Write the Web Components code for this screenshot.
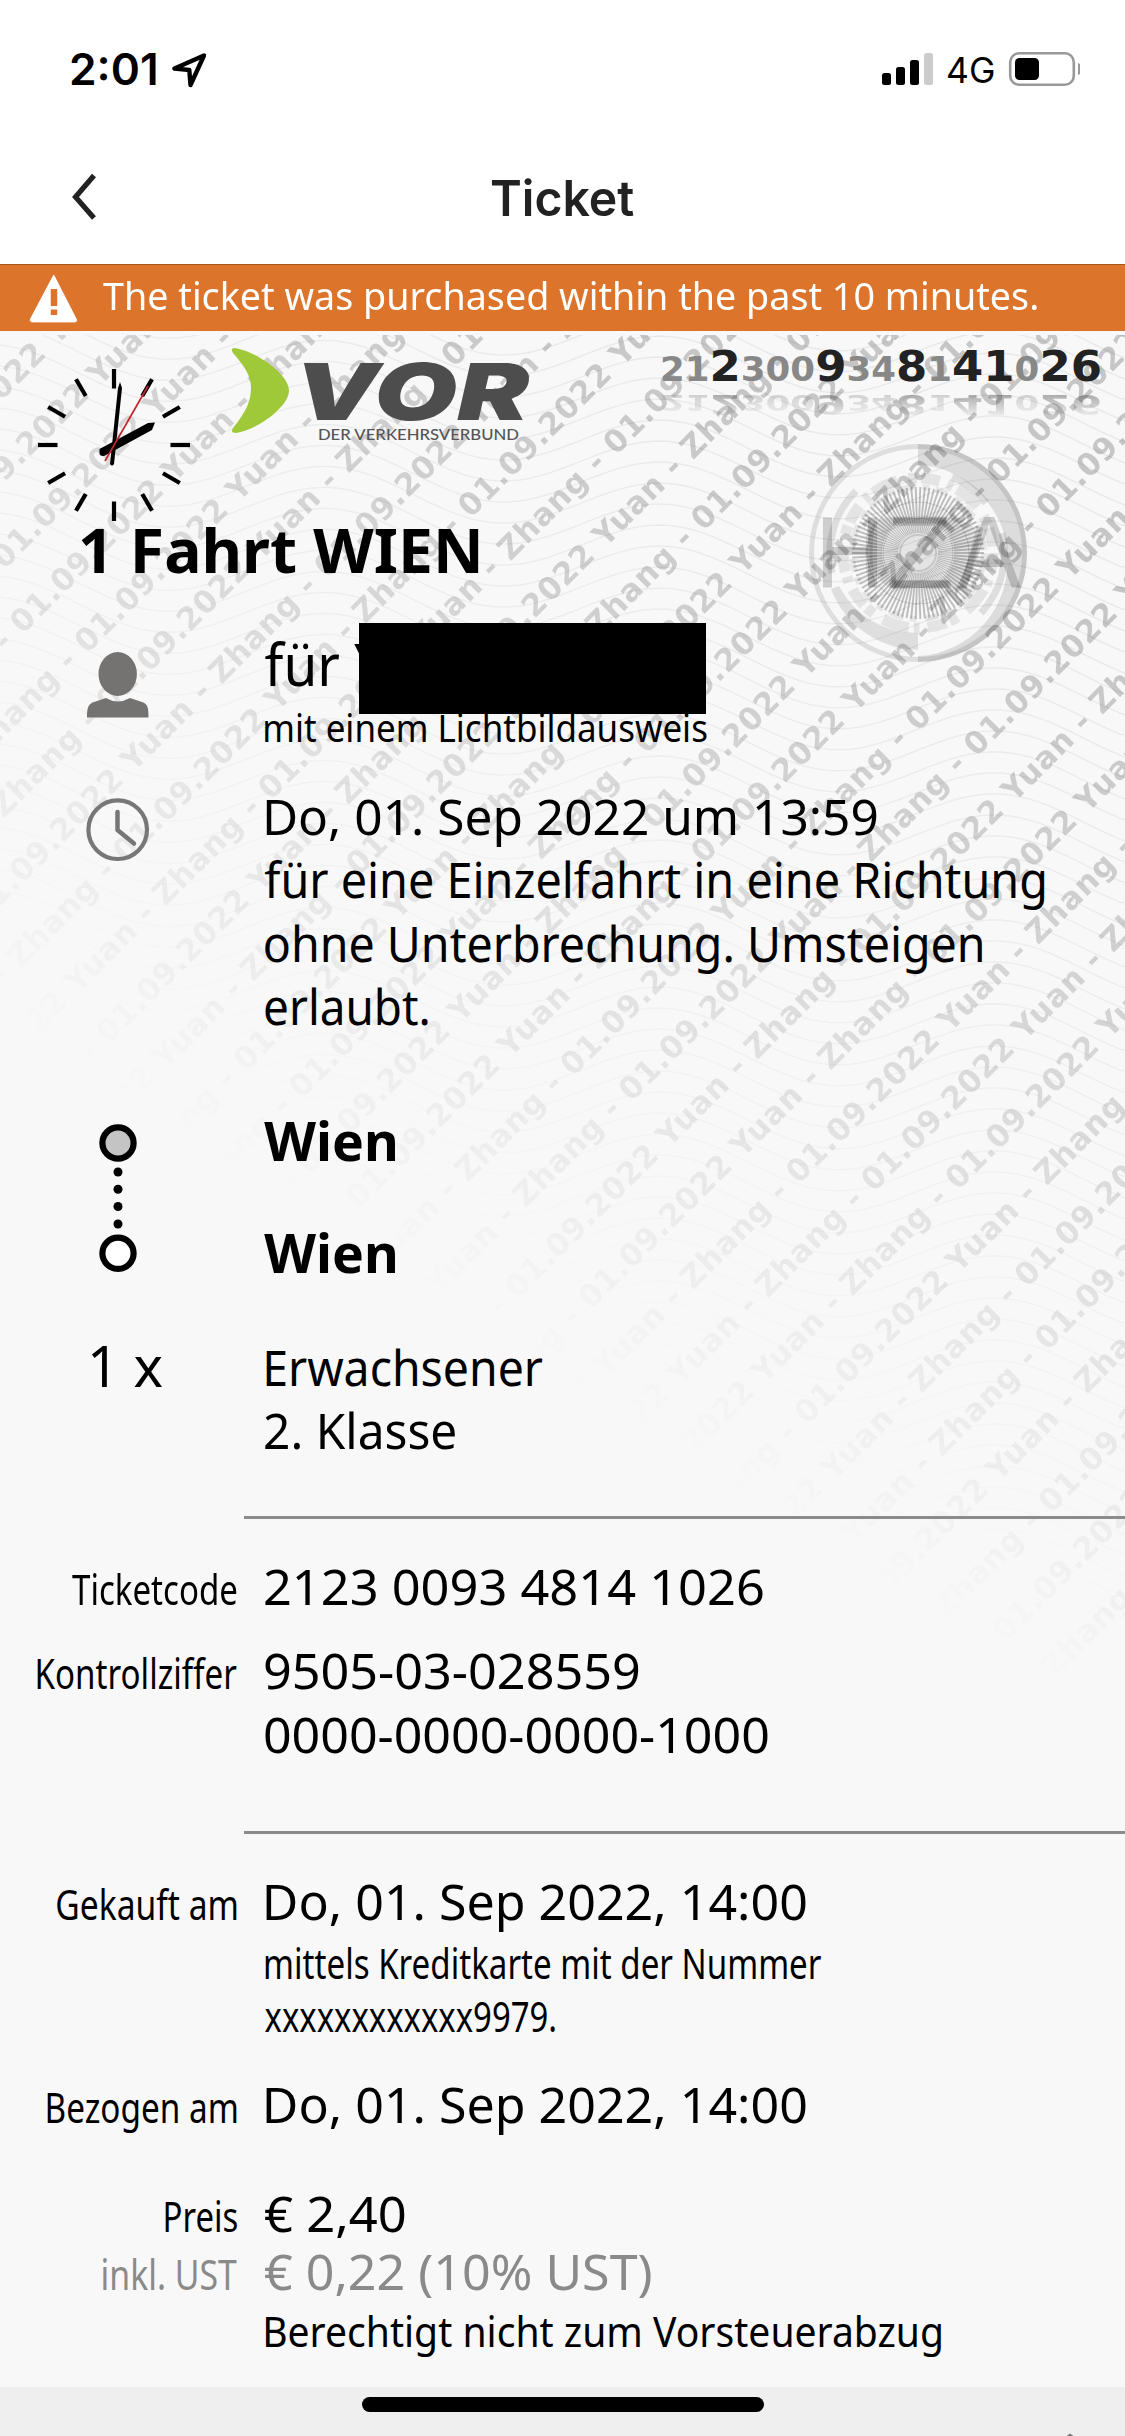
<!DOCTYPE html>
<html lang="de">
<head>
<meta charset="utf-8">
<title>Ticket</title>
<style>
html,body{margin:0;padding:0}
body{width:1125px;height:2436px;overflow:hidden;background:#fff}
</style>
</head>
<body>
<ticket-app></ticket-app>
<script>
const SANS = '"Noto Sans","Open Sans",sans-serif';
const UI = 'Inter,"Liberation Sans",sans-serif';
const measure = document.createElement('canvas').getContext('2d');

function define(name, html, setup) {
  const tpl = document.createElement('template');
  tpl.innerHTML = html;
  customElements.define(name, class extends HTMLElement {
    constructor() {
      super();
      this.attachShadow({ mode: 'open' }).appendChild(tpl.content.cloneNode(true));
    }
    connectedCallback() { if (setup) setup.call(this, this.shadowRoot); }
  });
}

/* One line of text whose ink fills a given width, on a given baseline. */
customElements.define('fit-text', class extends HTMLElement {
  connectedCallback() {
    const a = (n, d) => this.getAttribute(n) || d;
    const size = +a('size', 48.5), w = +a('w', 100), base = +a('base', 50.5), h = +a('h', 60), dx = +a('dx', 0);
    const weight = a('weight', '400'), style = a('fstyle', 'normal');
    const family = this.hasAttribute('ui') ? UI : a('family', SANS);
    const text = a('text', '');
    measure.font = `${style} ${weight} ${size}px ${family}`;
    const m = measure.measureText(text);
    const s = w / (m.actualBoundingBoxLeft + m.actualBoundingBoxRight);
    const pad = base - (m.fontBoundingBoxAscent - m.fontBoundingBoxDescent) / 2;
    const root = this.shadowRoot || this.attachShadow({ mode: 'open' });
    root.innerHTML = `<style>
      :host{display:block;flex:none;width:${w}px;height:${h}px;color:${a('color', '#000')}}
      span{display:block;width:max-content;white-space:pre;margin-top:0;padding-top:${pad}px;
        font:${style} ${weight} ${size}px/0 ${family};transform-origin:0 0;
        transform:translateX(${m.actualBoundingBoxLeft * s + dx}px) scaleX(${s})}
    </style><span></span>`;
    root.querySelector('span').textContent = text;
  }
});

define('status-bar', `<style>
  :host{display:flex;height:132px;padding:0 45px 0 71px;box-sizing:border-box;justify-content:space-between}
  div{display:flex;align-items:flex-start}
  svg{display:block}
</style>
<div><fit-text ui weight="600" size="44" w="85" base="85" text="2:01"></fit-text>
<svg width="50" height="132" viewBox="156 0 50 132"><path d="M204 55.500L174.500 68.500L189.300 70L190.500 85L204 55.500Z" fill="none" stroke="#000" stroke-width="4.400" stroke-linejoin="round"/></svg></div>
<div><svg width="66" height="132" viewBox="882 0 66 132"><g fill="#000"><rect x="882" y="73" width="9" height="12" rx="2.500"/><rect x="896" y="67" width="9" height="18" rx="2.500"/><rect x="910" y="60" width="9" height="25" rx="2.500"/><rect x="924" y="53" width="9" height="32" rx="2.500" fill="#ccc"/></g></svg>
<fit-text ui weight="400" size="35.500" w="46" base="83" text="4G"></fit-text>
<svg width="86" height="132" viewBox="994 0 86 132"><rect x="1010.200" y="53.200" width="63.600" height="31.600" rx="9" fill="#fff" stroke="#999" stroke-width="2.600"/><rect x="1015" y="58" width="24" height="22" rx="4.500"/><path d="M1078 63v12c5-2 5-10 0-12z" fill="#999"/></svg></div>`);

define('nav-bar', `<style>
  :host{display:flex;height:132px}
  svg{display:block;width:491px;height:132px}
</style>
<svg viewBox="0 132 491 132"><path d="M94 175.500L75.500 197L94 218" fill="none" stroke="#222" stroke-width="5.200"/></svg>
<fit-text ui weight="600" size="49" w="143" base="84" color="#222" text="Ticket"></fit-text>`);

define('notice-banner', `<style>
  :host{display:flex;height:67px;box-sizing:border-box;border-top:1px solid #a4561e;background:#dc752b}
  svg{display:block;flex:none;width:102.500px;height:66px}
</style>
<svg viewBox="0 265 103 66"><path d="M54 275L76.500 319Q78 322 75 322H33Q29 322 31 318.500Z" fill="#fff" stroke="#fff" stroke-linejoin="round"/><path d="M51 289h6.500v17H51zM51 309.500h6.500v5.500H51z" fill="#dc752b"/></svg>
<fit-text size="38.500" w="934" base="45" color="#fff" text="The ticket was purchased within the past 10 minutes."></fit-text>`);

/* Security background: waves, diagonal holder text and the inspection seal. */
define('ticket-watermark', `<style>
  :host{display:block;position:absolute;left:0;top:4px;width:1125px;height:1700px;overflow:hidden;pointer-events:none}
  svg{display:block}
</style>
<svg width="1125" height="1700" viewBox="0 335 1125 1700" aria-hidden="true">
<defs><linearGradient id="f" gradientUnits="userSpaceOnUse" x1="700" y1="350" x2="190" y2="1143">
<stop offset="0" stop-color="#fff"/><stop offset=".3" stop-color="#fff" stop-opacity=".8"/><stop offset=".65" stop-color="#fff" stop-opacity=".4"/><stop offset="1" stop-color="#fff" stop-opacity="0"/></linearGradient>
<mask id="m" maskUnits="userSpaceOnUse" x="0" y="335" width="1125" height="1700"><rect y="335" width="1125" height="1700" fill="url(#f)"/></mask></defs>
<g mask="url(#m)"><g id="waves" fill="none" stroke="#000" stroke-opacity=".06" stroke-width="1.500"></g>
<g id="rows" transform="rotate(-45)" fill="#000" fill-opacity=".2" font-family="'DejaVu Sans',sans-serif" font-weight="700" font-size="31"></g></g>
<g id="seal" transform="translate(918 553)">
 <circle r="106.500" fill="none" stroke="#000" stroke-opacity=".1" stroke-width="5"/>
 <path d="M0-109A109 109 0 0 1 109 0A109 109 0 0 1 0 109V103A94 94 0 0 0 89 0C88-44 45-88 0-88Z" fill="#000" fill-opacity=".11"/>
 <path d="M0 97A95 95 0 0 1-87 36L-79 33A87 87 0 0 0 0 80Z" fill="#000" fill-opacity=".1"/>
 <path d="M-86 20A88 88 0 0 1-62-62M63 60A87 87 0 0 0 84-20M34-76A84 84 0 0 1 68-50" fill="none" stroke="#000" stroke-opacity=".1" stroke-width="7"/>
 <circle r="75" fill="none" stroke="#000" stroke-opacity=".08" stroke-width="11" stroke-dasharray="19 8 6 5 27 11 9 4"/>
 <circle r="66" fill="none" stroke="#000" stroke-opacity=".07" stroke-width="6" stroke-dasharray="7 6 13 9"/>
 <path d="M-49-23Q-43-36-24-36H29Q54-33 61-18Q58 8 45 36H-22Q-39 33-48 11Z" fill="#000" fill-opacity=".08"/>
 <g id="rays" stroke="#000" stroke-opacity=".24" stroke-width="1.900"></g>
 <g fill="none" stroke="#000" stroke-opacity=".13"><circle r="18" stroke-width="2"/><circle r="35"/><circle r="51"/>
 <path d="M-25-33H29M-24 31H33M-46-32Q-52 0-46 34M62-26Q55 5 45 35" stroke-width="7"/></g>
 <g fill="#000" fill-opacity=".17" font-family="'Liberation Sans',sans-serif" font-size="102"><text x="-103" y="35" textLength="70" lengthAdjust="spacingAndGlyphs">H</text><text x="-32" y="35" textLength="66" lengthAdjust="spacingAndGlyphs">Z</text><text x="39" y="35" textLength="64" lengthAdjust="spacingAndGlyphs">A</text></g>
</g></svg>`, function (root) {
  const period = 690;
  const rows = [[307,-140],[389,-140],[473,-137],[561,-113],[644,-159],[728,-114],[809,-151],[893,201],[976,-285],[1058.5,-77],
    [1140,207],[1222,-65],[1305,317],[1388,345],[1471,277],[1555,292],[1637,-51],[1720.5,-18],[1804,-329],[1888,-266],
    [1970,67],[2053,134],[2135.500,220],[2219.500,-165],[2302,192],[2385.500,149],[2468,-333],[2552,-10],[2635,-185],[2719,-650]];
  let out = '';
  for (const [c, d0] of rows) {
    for (let k = -4; k <= 4; k++) {
      const d = d0 + k * period;
      const x0 = (c + d) / 2, y0 = (c - d) / 2;
      if (x0 > 1130 || x0 < -330 || y0 < 325 || y0 > 2000) continue;
      out += `<text x="${(d / Math.SQRT2 - 7).toFixed(1)}" y="${(c / Math.SQRT2 + 9.5).toFixed(1)}" textLength="476">- Zhang - 01.09.2022 Yuan</text>`;
    }
  }
  root.getElementById('rows').innerHTML = out;

  let waves = '';
  for (let y = 180; y < 2000; y += 21) {
    let p = '';
    for (let x = 0; x <= 1130; x += 10)
      p += (x ? 'L' : 'M') + x + ' ' + (y + x * .05 - 24 * Math.cos((x - 665) / 335 * 2 * Math.PI)).toFixed(1);
    waves += `<path d="${p}"/>`;
  }
  root.getElementById('waves').innerHTML = waves;

  let rays = '';
  for (let i = 0; i < 90; i++) {
    const a = i * 4 * Math.PI / 180, c = Math.cos(a), s = Math.sin(a);
    rays += `<line x1="${20 * c}" y1="${20 * s}" x2="${36 * c}" y2="${36 * s}" stroke-width=".8"/><line x1="${36 * c}" y1="${36 * s}" x2="${66 * c}" y2="${66 * s}"/>`;
  }
  root.getElementById('rays').innerHTML = rays;
});

define('station-clock', `<style>:host{display:block;width:232px;height:192px}svg{display:block}</style>
<svg width="232" height="192" viewBox="0 331 232 192"><g transform="translate(114 445)"><g id="t" stroke="#000" stroke-width="4.200"></g>
<path d="M-14.500 4L34-22L41-22.500L38-15L-9 10.500Q-13 12-14.500 9Z"/><path d="M-4 19L4-57L6-63L8-57L0 19Q-2 22-4 19Z"/><path d="M-9 16L34-59" stroke="#c1272d" stroke-width="1.700"/></g></svg>`, function (root) {
  let t = '';
  for (let i = 0; i < 12; i++) t += `<line y1="-56.5" y2="-76" transform="rotate(${i * 30})"/>`;
  root.getElementById('t').innerHTML = t;
});

define('vor-logo', `<style>:host{display:flex;width:300px;height:192px}div{width:229px}svg{display:block;flex:none}fit-text+fit-text{margin-left:16px}</style>
<svg width="71" height="192" viewBox="232 331 71 192"><path d="M235 348C258 352 289 375 289 390.500C289 407 257 430 236 433Q230 433 233 428C246 412 251 401 251 388C251 376 245 367 233 353Q230 348 235 348Z" fill="#a0c93a"/></svg>
<div><fit-text family="Inter,'Open Sans',sans-serif" fstyle="italic" weight="900" size="79" w="229" base="88.500" h="94" color="#4d4d4d" text="VOR"></fit-text>
<fit-text family="Lato,'Open Sans',sans-serif" weight="500" size="15.200" w="200" base="15" h="20" color="#555" text="DER VERKEHRSVERBUND"></fit-text></div>`);

/* Code digits in two sizes with a mirrored reflection below. */
define('code-strip', `<style>:host{display:block}svg{display:block;font:700 34px "DejaVu Sans",sans-serif}</style>
<svg width="593" height="192" viewBox="532 331 593 192"><defs><linearGradient id="g" gradientUnits="userSpaceOnUse" x1="0" y1="395" x2="0" y2="416"><stop stop-color="#fff"/><stop offset="1" stop-color="#fff" stop-opacity=".15"/></linearGradient><mask id="k" maskUnits="userSpaceOnUse" x="640" y="390" width="480" height="30"><rect x="640" y="390" width="480" height="30" fill="url(#g)"/></mask></defs>
<text id="a" x="660" y="381" textLength="442" lengthAdjust="spacingAndGlyphs"></text>
<g mask="url(#k)" opacity=".35" aria-hidden="true"><text id="b" transform="translate(660 395) scale(1 -.6)" y="0" textLength="442" lengthAdjust="spacingAndGlyphs"></text></g></svg>`, function (root) {
  const code = '2123009348141026', big = new Set([2, 6, 9, 11, 12, 14, 15]);
  const spans = [...code].map((c, i) => `<tspan font-size="${big.has(i) ? 43 : 34}" fill="${big.has(i) ? '#222' : '#888'}">${c}</tspan>`).join('');
  root.getElementById('a').innerHTML = spans;
  root.getElementById('b').innerHTML = spans;
});

define('person-icon', `<style>:host{display:block}svg{display:block}</style><svg width="62" height="100" viewBox="88 636 62 100"><ellipse cx="118.700" cy="674" rx="19.200" ry="22" fill="#757372"/><path d="M88 717.500C88 708 89 704 95 702L107 698Q118.500 705 131 698L143 702C149 704 149.500 708 149.500 717.500Z" fill="#757372"/></svg>`);
define('time-icon', `<style>:host{display:block}svg{display:block}</style><svg width="64" height="80" viewBox="87 784 64 80"><circle cx="118.700" cy="829.700" r="29.300" fill="none" stroke="#777" stroke-width="4.200"/><path d="M118.500 812V830L135 843.500" fill="none" stroke="#777" stroke-width="4.500" stroke-linecap="round" stroke-linejoin="round"/></svg>`);
define('route-icon', `<style>:host{display:block}svg{display:block}</style><svg width="42" height="170" viewBox="98 1110 42 170"><g stroke="#000" stroke-width="6.200"><circle cx="119" cy="1143" r="15.600" fill="#c4c4c4"/><circle cx="119" cy="1253.300" r="15.600" fill="#fff"/></g><circle cx="119" cy="1172" r="4.500"/><circle cx="119" cy="1189.300" r="4.500"/><circle cx="119" cy="1206.500" r="4.500"/><circle cx="119" cy="1224" r="4.500"/></svg>`);

define('ticket-row', `<style>
  :host{display:flex;height:var(--h);position:relative}
  .label{width:236.500px;display:flex;justify-content:flex-end;flex:none}
  :host([icon]) .label{justify-content:center}
  .value{padding-left:28px}
</style><div class="label"><slot name="label"></slot></div><div class="value"><slot></slot></div>`);

define('ticket-rule', `<style>:host{display:block;height:var(--h)}i{display:block;height:3px;margin-left:244px;background:#8b8b8b}</style><i></i>`);

define('ticket-body', `<style>
  :host{display:block;position:relative;height:2056px;background:#f8f8f8}
  .content{position:relative;display:flex;flex-direction:column}
  .top{display:flex;height:192px}
  .title{height:113px;padding-left:81px}
  .mask{position:absolute;left:359px;top:292px;width:347px;height:91px;background:#000}
</style>
<ticket-watermark></ticket-watermark>
<div class="content">
<div class="top"><station-clock></station-clock><vor-logo></vor-logo><code-strip></code-strip></div>
<div class="title"><fit-text weight="700" size="61" w="398" text="1 Fahrt WIEN"></fit-text></div>
<ticket-row icon style="--h:148px"><person-icon slot="label"></person-icon>
 <fit-text size="58" w="121" h="55" dx="-.5" text="für Y"></fit-text><fit-text size="37.500" w="442" base="51" text="mit einem Lichtbildausweis"></fit-text>
</ticket-row>
<ticket-row icon style="--h:326px"><time-icon slot="label"></time-icon>
 <fit-text w="611" dx="1" h="63" text="Do, 01. Sep 2022 um 13:59"></fit-text><fit-text w="780" h="64" dx="-.7" text="für eine Einzelfahrt in eine Richtung"></fit-text><fit-text w="718" h="63" dx="-.3" text="ohne Unterbrechung. Umsteigen"></fit-text><fit-text w="163" text="erlaubt."></fit-text></ticket-row>
<ticket-row icon style="--h:225.500px"><route-icon slot="label"></route-icon>
 <fit-text weight="700" size="53" w="131" h="112" base="51" dx="-.8" text="Wien"></fit-text><fit-text weight="700" size="53" w="131" base="51" dx="-.8" text="Wien"></fit-text></ticket-row>
<ticket-row icon style="--h:180px"><fit-text slot="label" size="57" w="71" base="51" text="1 x" style="margin-left:19px"></fit-text>
 <fit-text w="277" dx="1" h="63" text="Erwachsener"></fit-text><fit-text w="190" text="2. Klasse"></fit-text></ticket-row>
<ticket-rule style="--h:39px"></ticket-rule>
<ticket-row style="--h:84px"><fit-text slot="label" size="41" w="165" text="Ticketcode"></fit-text><fit-text w="498" text="2123 0093 4814 1026"></fit-text></ticket-row>
<ticket-row style="--h:192px"><fit-text slot="label" size="41" w="200" text="Kontrollziffer"></fit-text><fit-text w="374" h="63.500" text="9505-03-028559"></fit-text><fit-text w="503" text="0000-0000-0000-1000"></fit-text></ticket-row>
<ticket-rule style="--h:39px"></ticket-rule>
<ticket-row style="--h:202.500px"><fit-text slot="label" size="41" w="180" text="Gekauft am"></fit-text><fit-text w="540" dx="1" h="59" text="Do, 01. Sep 2022, 14:00"></fit-text><fit-text size="41" w="556" h="53" dx=".5" text="mittels Kreditkarte mit der Nummer"></fit-text><fit-text size="41" w="291" dx="-.5" text="xxxxxxxxxxxx9979."></fit-text></ticket-row>
<ticket-row style="--h:109.500px"><fit-text slot="label" size="41" w="190" text="Bezogen am"></fit-text><fit-text w="540" dx="1" text="Do, 01. Sep 2022, 14:00"></fit-text></ticket-row>
<ticket-row style="--h:58px"><fit-text slot="label" size="41" w="72" text="Preis"></fit-text><fit-text w="140" text="€ 2,40"></fit-text></ticket-row>
<ticket-row style="--h:57px"><fit-text slot="label" size="41" w="134" color="#8a8a8a" text="inkl. UST"></fit-text><fit-text w="386" color="#8a8a8a" text="€ 0,22 (10% UST)"></fit-text></ticket-row>
<ticket-row style="--h:90px"><fit-text size="41" w="676" text="Berechtigt nicht zum Vorsteuerabzug"></fit-text></ticket-row>
<div class="mask"></div>
</div>`);

define('home-area', `<style>:host{display:grid;grid-template-columns:362px 402px 361px;height:49px;background:#efefef}i{display:block;grid-column:2;height:15px;margin-top:10px;border-radius:8px;background:#000}svg{display:block}</style><i></i><svg width="361" height="49" viewBox="764 2387 361 49"><path d="M1066.500 2436L1070 2433.500L1073.500 2436Z" fill="#777"/></svg>`);

define('ticket-app', `<style>:host{display:flex;flex-direction:column;width:1125px;height:2436px;background:#fff}</style>
<status-bar></status-bar><nav-bar></nav-bar><notice-banner></notice-banner><ticket-body></ticket-body><home-area></home-area>`);
</script>
</body>
</html>
